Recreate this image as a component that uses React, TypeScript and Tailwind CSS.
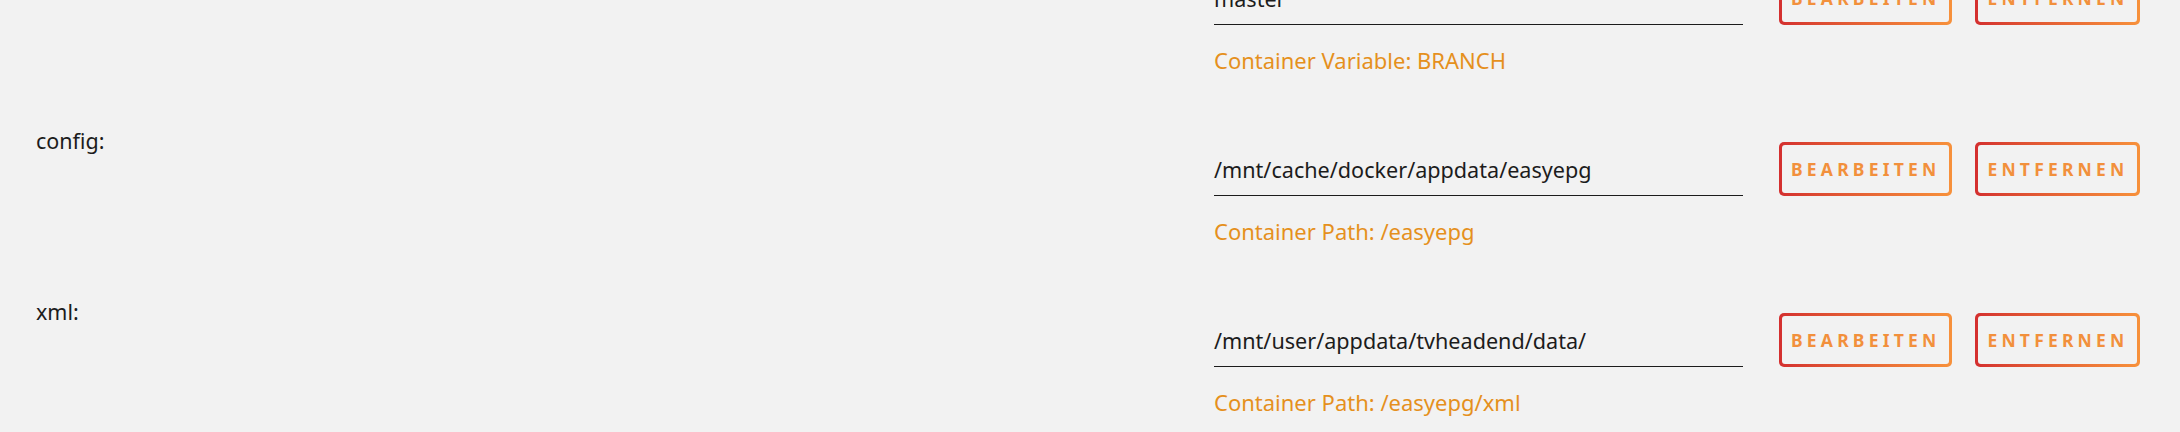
const rows = [
  { label: 'Branch:', value: 'master', hint: 'Container Variable: BRANCH' },
  { label: 'config:', value: '/mnt/cache/docker/appdata/easyepg', hint: 'Container Path: /easyepg' },
  { label: 'xml:', value: '/mnt/user/appdata/tvheadend/data/', hint: 'Container Path: /easyepg/xml' },
]

function GradientButton({ children }: { children: string }) {
  return (
    <div className="rounded-[5px] bg-gradient-to-r from-[#d42f2f] to-[#f7913b] p-[3px]">
      <div className="flex h-[48px] items-center rounded-[3px] bg-[#f2f2f2] px-[9px] text-[17.5px] font-bold tracking-[4.2px] text-[#f2903c]">
        {children}
      </div>
    </div>
  )
}

export default function App() {
  return (
    <div
      className="h-[432px] w-full overflow-hidden bg-[#f2f2f2] text-[#1c1c1c]"
      style={{ fontFamily: '"Noto Sans", "Open Sans", sans-serif' }}
    >
      <div className="-mt-[42px] flex flex-col">
        {rows.map((row) => (
          <div key={row.label} className="flex h-[171px]">
            <div className="w-[1214px] shrink-0 pl-[36px] text-[21.5px] leading-[24px]">
              {row.label}
            </div>
            <div className="w-[529px] shrink-0">
              <div className="mt-[17px] flex h-[50px] items-center border-b border-[#1c1c1c] text-[21.6px]">
                {row.value}
              </div>
              <div className="mt-[23px] text-[22px] leading-[24px] text-[#e5901d]">
                {row.hint}
              </div>
            </div>
            <div className="ml-[36px] mt-[13px] flex items-start gap-[23px]">
              <GradientButton>BEARBEITEN</GradientButton>
              <GradientButton>ENTFERNEN</GradientButton>
            </div>
          </div>
        ))}
      </div>
    </div>
  )
}
